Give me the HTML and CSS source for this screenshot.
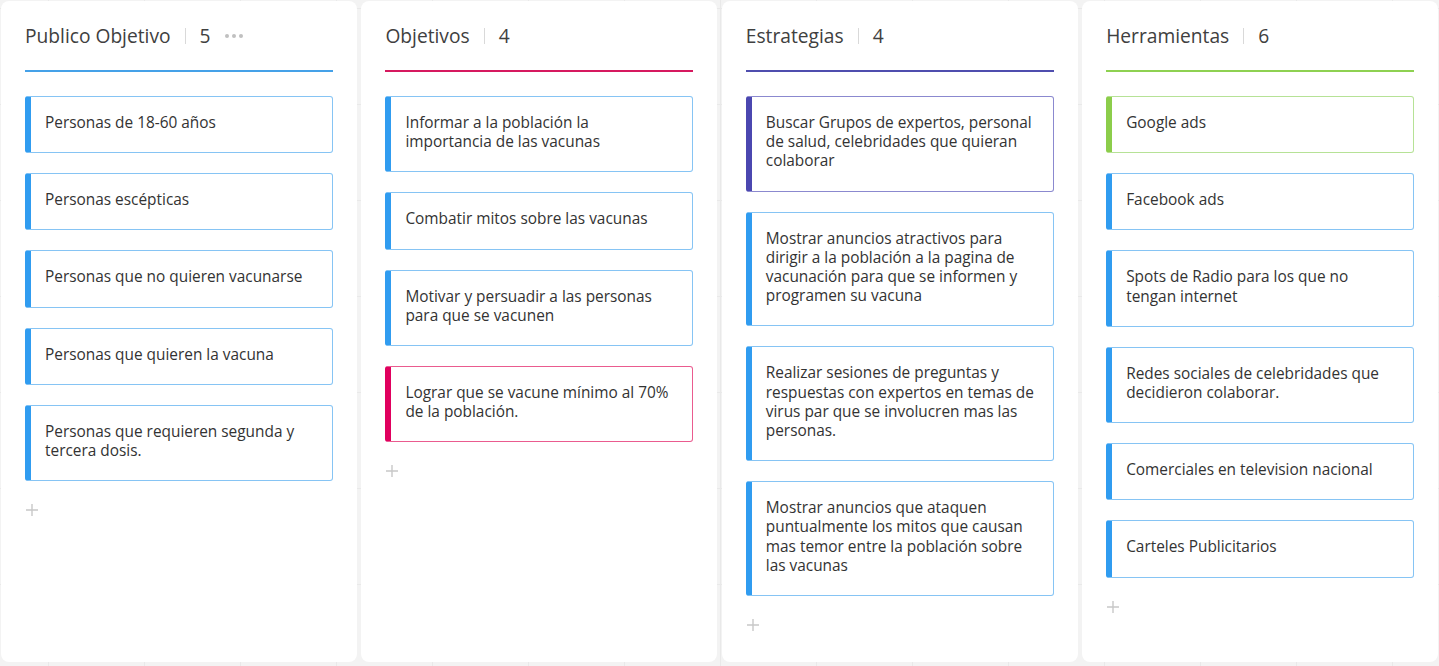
FILE: index.html
```html
<!DOCTYPE html>
<html lang="es">
<head>
<meta charset="utf-8">
<title>Tablero</title>
<link rel="stylesheet" href="styles.css">
</head>
<body>
<div class="board">
  <section class="column col-blue">
    <header class="col-head">
      <h2 class="col-title">Publico Objetivo</h2>
      <span class="col-sep"></span>
      <span class="col-count">5</span>
      <span class="col-more"><i></i><i></i><i></i></span>
    </header>
    <div class="col-line"></div>
    <div class="cards">
      <div class="card c-blue">Personas de 18-60 años</div>
      <div class="card c-blue">Personas escépticas</div>
      <div class="card c-blue">Personas que no quieren vacunarse</div>
      <div class="card c-blue">Personas que quieren la vacuna</div>
      <div class="card c-blue">Personas que requieren segunda y tercera dosis.</div>
    </div>
    <div class="add"><svg width="12" height="12" viewBox="0 0 12 12"><path d="M6 0v12M0 6h12" stroke="#c8c8c8" stroke-width="1.4" fill="none"/></svg></div>
  </section>

  <section class="column col-pink">
    <header class="col-head">
      <h2 class="col-title">Objetivos</h2>
      <span class="col-sep"></span>
      <span class="col-count">4</span>
    </header>
    <div class="col-line"></div>
    <div class="cards">
      <div class="card c-blue">Informar a la población la importancia de las vacunas</div>
      <div class="card c-blue">Combatir mitos sobre las vacunas</div>
      <div class="card c-blue">Motivar y persuadir a las personas para que se vacunen</div>
      <div class="card c-pink">Lograr que se vacune mínimo al 70% de la población.</div>
    </div>
    <div class="add"><svg width="12" height="12" viewBox="0 0 12 12"><path d="M6 0v12M0 6h12" stroke="#c8c8c8" stroke-width="1.4" fill="none"/></svg></div>
  </section>

  <section class="column col-purple">
    <header class="col-head">
      <h2 class="col-title">Estrategias</h2>
      <span class="col-sep"></span>
      <span class="col-count">4</span>
    </header>
    <div class="col-line"></div>
    <div class="cards">
      <div class="card c-purple">Buscar Grupos de expertos, personal de salud, celebridades que quieran colaborar</div>
      <div class="card c-blue">Mostrar anuncios atractivos para dirigir a la población a la pagina de vacunación para que se informen y programen su vacuna</div>
      <div class="card c-blue">Realizar sesiones de preguntas y respuestas con expertos en temas de virus par que se involucren mas las personas.</div>
      <div class="card c-blue">Mostrar anuncios que ataquen puntualmente los mitos que causan mas temor entre la población sobre las vacunas</div>
    </div>
    <div class="add"><svg width="12" height="12" viewBox="0 0 12 12"><path d="M6 0v12M0 6h12" stroke="#c8c8c8" stroke-width="1.4" fill="none"/></svg></div>
  </section>

  <section class="column col-green">
    <header class="col-head">
      <h2 class="col-title">Herramientas</h2>
      <span class="col-sep"></span>
      <span class="col-count">6</span>
    </header>
    <div class="col-line"></div>
    <div class="cards">
      <div class="card c-green">Google ads</div>
      <div class="card c-blue">Facebook ads</div>
      <div class="card c-blue">Spots de Radio para los que no tengan internet</div>
      <div class="card c-blue">Redes sociales de celebridades que decidieron colaborar.</div>
      <div class="card c-blue">Comerciales en television nacional</div>
      <div class="card c-blue">Carteles Publicitarios</div>
    </div>
    <div class="add"><svg width="12" height="12" viewBox="0 0 12 12"><path d="M6 0v12M0 6h12" stroke="#c8c8c8" stroke-width="1.4" fill="none"/></svg></div>
  </section>
</div>
</body>
</html>
```

FILE: styles.css
```css
html, body {
  margin: 0;
  padding: 0;
  height: 100%;
}
body {
  font-family: "Open Sans", "Noto Sans", "Liberation Sans", sans-serif;
  color: #333;
  background-color: #f3f3f3;
  background-image:
    linear-gradient(to right, #e9e9e9 1px, transparent 1px),
    linear-gradient(to bottom, #e9e9e9 1px, transparent 1px);
  background-size: 96px 96px;
  background-position: 48px 8px;
  overflow: hidden;
}
.board {
  display: flex;
  gap: 4.4px;
  padding: 1px 0 0 1px;
  height: 661px;
  box-sizing: content-box;
}
.column {
  width: 356px;
  flex: 0 0 356px;
  background: #fff;
  border-radius: 8px;
  padding: 21px 24px 0 24px;
  box-sizing: border-box;
  height: 661px;
}
.col-head {
  display: flex;
  align-items: center;
  height: 27px;
}
.col-title {
  margin: 0;
  font-size: 19.2px;
  font-weight: 400;
  color: #404040;
  line-height: 27px;
  white-space: nowrap;
}
.col-sep {
  width: 1px;
  height: 16px;
  background: #d9d9d9;
  margin: 0 14px 0 14px;
}
.col-count {
  font-size: 19.2px;
  color: #404040;
  line-height: 27px;
}
.col-more {
  display: flex;
  gap: 3px;
  margin-left: 14px;
  margin-top: 1px;
}
.col-more i {
  width: 4px;
  height: 4px;
  border-radius: 50%;
  background: #c0c0c0;
}
.col-line {
  height: 2px;
  margin-top: 21px;
}
.col-blue .col-line { background: #45a1e8; }
.col-pink .col-line { background: #d6195f; }
.col-purple .col-line { background: #4f4eae; }
.col-green .col-line { background: #8ed151; }

.cards {
  display: flex;
  flex-direction: column;
  gap: 20px;
  margin-top: 24px;
}
.card {
  border: 1px solid #8cc8f6;
  border-left-width: 6px;
  border-radius: 3px;
  padding: 16px 16px 20px 14px;
  font-size: 15.4px;
  line-height: 19.2px;
  color: #333;
  background: #fff;
}
.c-blue { border-color: #86c4f4; border-left-color: #309cf0; }
.c-pink { border-color: #ea5b8f; border-left-color: #e0005e; }
.c-purple { border-color: #8b89cf; border-left-color: #4b47b0; }
.c-green { border-color: #b6e296; border-left-color: #8ccd4b; }

.add {
  margin-top: 23px;
  margin-left: 1px;
  height: 12px;
  display: flex;
}
```
